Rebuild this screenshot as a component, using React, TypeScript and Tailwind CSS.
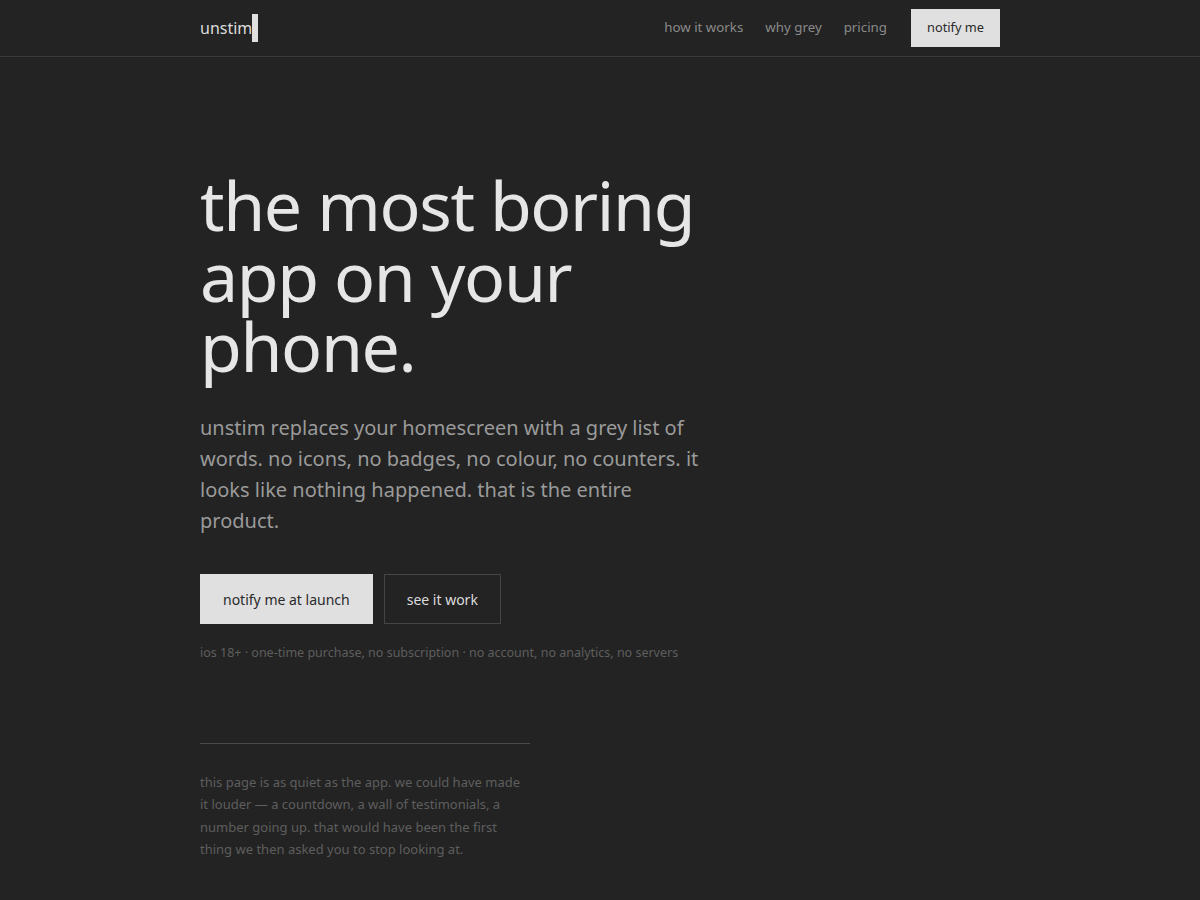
export default function App() {
  return (
    <div className="min-h-screen bg-[#232323] text-[#e0e0e0] font-['Noto_Sans',sans-serif]">
      <header className="border-b border-[#3a3a3a]">
        <div className="mx-auto flex h-14 w-[800px] items-center justify-between">
          <a href="#" className="flex items-center text-[16px] text-[#dcdcdc]">
            unstim
            <span className="inline-block h-7 w-[6px] bg-[#e0e0e0]" />
          </a>
          <nav className="flex items-center text-[13.3px] text-[#8a8a8a]">
            <a href="#" className="mr-[22px]">how it works</a>
            <a href="#" className="mr-[22px]">why grey</a>
            <a href="#" className="mr-6">pricing</a>
            <a href="#" className="flex h-[38px] items-center bg-[#e0e0e0] px-4 text-[12.8px] text-[#2a2a2a]">
              notify me
            </a>
          </nav>
        </div>
      </header>

      <main className="mx-auto w-[800px] pt-[113px]">
        <h1 className="max-w-[520px] text-[68px] leading-[70.7px] tracking-[-0.02em] text-[#e6e6e6]">
          the most boring app on your phone.
        </h1>
        <p className="mt-[30px] max-w-[505px] text-[20px] leading-[31px] text-[#9a9a9a]">
          unstim replaces your homescreen with a grey list of words. no icons, no badges, no colour, no
          counters. it looks like nothing happened. that is the entire product.
        </p>

        <div className="mt-[38px] flex gap-[11px]">
          <button className="h-[50px] bg-[#e0e0e0] px-[23px] text-[14px] text-[#2a2a2a]">
            notify me at launch
          </button>
          <button className="h-[50px] border border-[#454545] px-[22px] text-[14px] text-[#dcdcdc]">
            see it work
          </button>
        </div>

        <p className="mt-[20px] text-[12.5px] text-[#5e5e5e]">
          ios 18+ · one-time purchase, no subscription · no account, no analytics, no servers
        </p>

        <div className="mt-[80px] w-[330px] border-t border-[#4a4a4a] pt-[27px]">
          <p className="text-[13px] leading-[22.5px] text-[#5e5e5e]">
            this page is as quiet as the app. we could have made it louder — a countdown, a wall of
            testimonials, a number going up. that would have been the first thing we then asked you to
            stop looking at.
          </p>
        </div>
      </main>
    </div>
  )
}
